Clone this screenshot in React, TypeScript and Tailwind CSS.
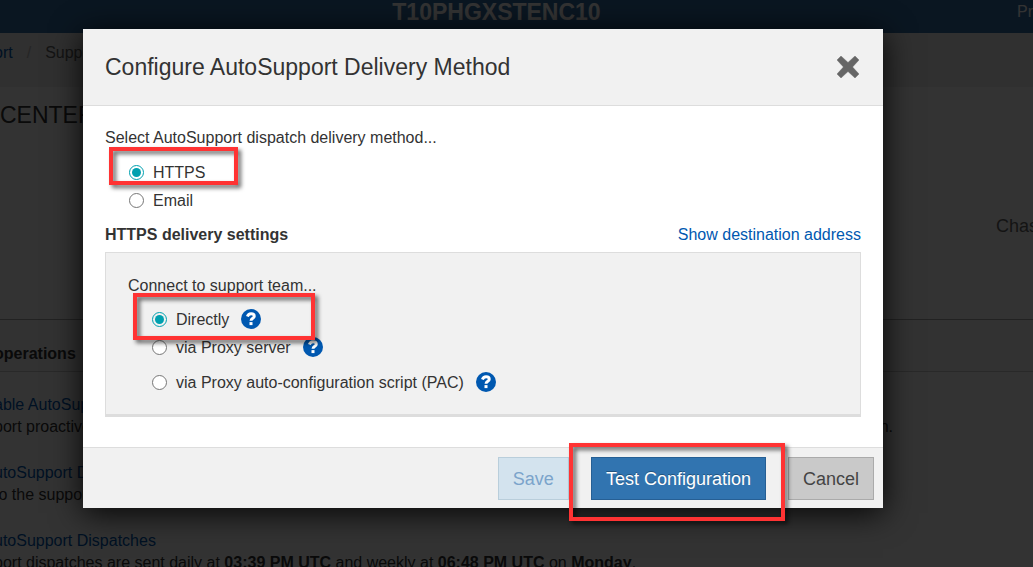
import React, { useState } from 'react';
import type { ReactNode } from 'react';

const HelpIcon = () => (
  <svg viewBox="0 0 20 20" className="size-5 shrink-0" aria-hidden="true">
    <circle cx="10" cy="10" r="10" fill="#0058b0" />
    <path
      d="M6.4 7.500C7 5.500 8.300 4.700 10.100 4.700C12.200 4.700 13.300 5.800 13.300 7.200C13.300 9.300 10 9.200 10 11.800"
      fill="none"
      stroke="#fff"
      strokeWidth="2.900"
    />
    <rect x="8.500" y="13.100" width="3" height="3" fill="#fff" />
  </svg>
);

const CloseIcon = () => (
  <svg viewBox="0 0 22 22" className="size-[22px]" aria-hidden="true">
    <path
      d="M4 0L11 6.400L18 0L22 4L15.600 11L22 18L18 22L11 15.600L4 22L0 18L6.400 11L0 4Z"
      fill="#666"
      stroke="#666"
      strokeWidth="0.400"
      strokeLinejoin="round"
    />
  </svg>
);

// Red marker drawn around the controls to use
const Highlight = ({ className }: { className: string }) => (
  <div
    className={`pointer-events-none absolute z-10 border-4 border-[#ff3333] drop-shadow-[3px_3px_2px_rgba(0,0,0,0.6)] ${className}`}
  />
);

interface RadioProps {
  name: string;
  label: string;
  checked: boolean;
  onChange: () => void;
  children?: ReactNode;
}

const Radio = ({ name, label, checked, onChange, children }: RadioProps) => (
  <div className="flex h-7 items-center gap-3">
    <label className="flex items-center gap-[9px]">
      <input
        type="radio"
        name={name}
        checked={checked}
        onChange={onChange}
        className="size-[15px] shrink-0 appearance-none rounded-full border border-[#767676] bg-white checked:border-[#00a0af] checked:bg-[#00a0af] checked:bg-clip-content checked:p-[2px]"
      />
      <span className="pt-0.5">{label}</span>
    </label>
    {children}
  </div>
);

const HelpButton = ({ topic }: { topic: string }) => (
  <button type="button" aria-label={`Help: ${topic}`}>
    <HelpIcon />
  </button>
);

const Page = () => (
  <div className="min-h-screen overflow-hidden whitespace-nowrap bg-white">
    <header className="flex h-[33px] bg-[#326ea5] text-white">
      <h1 className="flex-1 pr-6 text-center text-[23px] leading-6 font-bold">T10PHGXSTENC10</h1>
      <span className="w-4 leading-6">Pr</span>
    </header>
    <nav className="flex h-[54px] bg-[#ededed] pt-2 leading-6">
      <div className="-ml-1.5 flex gap-[14px]">
        <a href="#support" className="text-[#0058b0]">ort</a>
        <span className="text-[#bbb]">/</span>
        <span className="text-[#666]">Support</span>
      </div>
    </nav>
    <h2 className="h-[125px] pt-3 text-[23px] leading-8">CENTER</h2>
    <div className="flex h-[108px] justify-end border-b border-[#aaa] text-lg text-[#666]">
      <span className="w-[37px]">Chas</span>
    </div>
    <div className="h-[52px] border-b border-[#ccc] bg-[#f8f8f8] pt-[22px]">
      <h3 className="-ml-1.5 leading-6 font-bold">operations</h3>
    </div>
    <div className="-ml-1.5 flex flex-col gap-6 pt-[22px] leading-[22px]">
      <div>
        <a href="#enable" className="text-[#0058b0]">able AutoSupport</a>
        <div className="flex justify-between pr-[140px]">
          <p>port proactive</p>
          <p>n.</p>
        </div>
      </div>
      <div>
        <a href="#delivery" className="text-[#0058b0]">utoSupport Delivery</a>
        <p>to the support</p>
      </div>
      <div>
        <a href="#dispatches" className="text-[#0058b0]">utoSupport Dispatches</a>
        <p>
          port dispatches are sent daily at <b>03:39 PM UTC</b> and weekly at <b>06:48 PM UTC</b> on <b>Monday</b>.
        </p>
      </div>
    </div>
  </div>
);

const DeliveryDialog = () => {
  const [method, setMethod] = useState('https');
  const [route, setRoute] = useState('direct');

  return (
    <form
      role="dialog"
      aria-labelledby="dialog-title"
      className="relative w-full max-w-[800px] bg-white shadow-[0_5px_30px_rgba(0,0,0,0.9)]"
      onSubmit={(e) => e.preventDefault()}
    >
      <div className="flex h-[77px] items-center justify-between border-b border-[#ddd] bg-[#f1f1f1] pr-6 pl-[22px]">
        <h2 id="dialog-title" className="text-[23px]">Configure AutoSupport Delivery Method</h2>
        <button type="button" aria-label="Close">
          <CloseIcon />
        </button>
      </div>

      <div className="px-[22px] pt-5 pb-[30px]">
        <fieldset>
          <legend className="leading-6">Select AutoSupport dispatch delivery method...</legend>
          <div className="relative pt-2 pl-6">
            <Radio name="method" label="HTTPS" checked={method === 'https'} onChange={() => setMethod('https')} />
            <Radio name="method" label="Email" checked={method === 'email'} onChange={() => setMethod('email')} />
            <Highlight className="-top-[3px] left-1 h-[38px] w-[129px]" />
          </div>
        </fieldset>

        <div className="flex justify-between pt-[9px] leading-6">
          <h3 className="font-bold">HTTPS delivery settings</h3>
          <a href="#destination" className="text-[#0058b0]">Show destination address</a>
        </div>

        <fieldset className="mt-[5px] border border-b-[3px] border-[#ddd] bg-[#f1f1f1] px-[22px] pt-[21px] pb-[18px]">
          <p className="leading-6">Connect to support team...</p>
          <div className="relative pt-[7px] pl-6">
            <Radio name="route" label="Directly" checked={route === 'direct'} onChange={() => setRoute('direct')}>
              <HelpButton topic="direct connection" />
            </Radio>
            <Radio name="route" label="via Proxy server" checked={route === 'proxy'} onChange={() => setRoute('proxy')}>
              <HelpButton topic="proxy server" />
            </Radio>
            <div className="pt-[7px]">
              <Radio
                name="route"
                label="via Proxy auto-configuration script (PAC)"
                checked={route === 'pac'}
                onChange={() => setRoute('pac')}
              >
                <HelpButton topic="proxy script" />
              </Radio>
            </div>
            <Highlight className="-top-[5px] left-[5px] h-[47px] w-[182px]" />
          </div>
        </fieldset>
      </div>

      <div className="flex justify-end gap-[22px] border-t border-[#ddd] bg-[#f1f1f1] pt-[9px] pr-[9px] pb-2 text-lg">
        <button type="button" disabled className="h-[43px] border border-[#b9cedb] bg-[#d3e3ee] px-[14px] text-[#7ba4cb]">
          Save
        </button>
        <div className="relative">
          <button
            type="submit"
            className="h-[43px] border border-[#265f94] bg-[#3174b0] px-[14px] text-white text-shadow-[0_-1px_0_rgba(0,0,0,0.3)]"
          >
            Test Configuration
          </button>
          <Highlight className="-top-[14px] -right-[19px] -left-[22px] h-[78px]" />
        </div>
        <button type="button" className="h-[43px] border border-[#aaa] bg-[#c9c9c9] px-[14px] text-[#444]">
          Cancel
        </button>
      </div>
    </form>
  );
};

const App: React.FC = () => {
  return (
    <div className="relative h-screen overflow-hidden font-['Liberation_Sans',Arial,sans-serif] text-base text-[#333]">
      <Page />
      <div className="absolute inset-0 flex items-start justify-center bg-black/80 pt-[29px] pr-[67px]">
        <DeliveryDialog />
      </div>
    </div>
  );
};

export default App;
